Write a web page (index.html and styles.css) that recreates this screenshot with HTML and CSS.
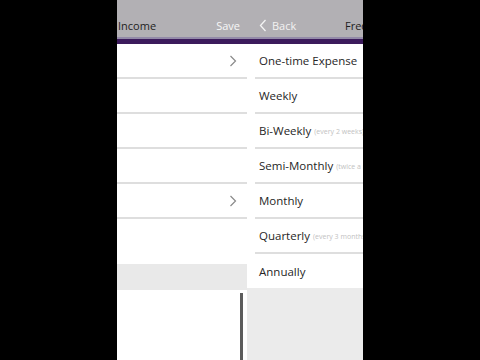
FILE: index.html
```html
<!DOCTYPE html>
<html>
<head>
<meta charset="utf-8">
<link rel="stylesheet" href="styles.css">
</head>
<body>
<div class="phone">
  <section class="panel left">
    <header class="bar">
      <span class="title">Income</span>
      <span class="action">Save</span>
    </header>
    <div class="rows">
      <div class="row"><svg class="chev" width="8" height="12" viewBox="0 0 8 12"><path d="M1.5 1 L6.5 6 L1.5 11" fill="none" stroke="#8a8a8a" stroke-width="1.2"/></svg></div>
      <div class="row"></div>
      <div class="row"></div>
      <div class="row"></div>
      <div class="row"><svg class="chev" width="8" height="12" viewBox="0 0 8 12"><path d="M1.5 1 L6.5 6 L1.5 11" fill="none" stroke="#8a8a8a" stroke-width="1.2"/></svg></div>
    </div>
    <div class="spacer"></div>
    <div class="section"></div>
    <div class="notes"><div class="scroll"></div></div>
  </section>
  <section class="panel right">
    <header class="bar">
      <span class="back"><svg width="8" height="13" viewBox="0 0 8 13"><path d="M6.5 1 L1.5 6.5 L6.5 12" fill="none" stroke="#f4f4f4" stroke-width="1.3"/></svg>Back</span>
      <span class="title">Frequency</span>
    </header>
    <ul class="list">
      <li>One-time Expense</li>
      <li>Weekly</li>
      <li>Bi-Weekly <small>(every 2 weeks)</small></li>
      <li>Semi-Monthly <small>(twice a month)</small></li>
      <li>Monthly</li>
      <li>Quarterly <small>(every 3 months)</small></li>
      <li class="last">Annually</li>
    </ul>
  </section>
</div>
</body>
</html>
```

FILE: styles.css
```css
html, body {
  margin: 0;
  padding: 0;
  background: #000;
  height: 360px;
  overflow: hidden;
}
body {
  display: flex;
  justify-content: center;
  font-family: "Open Sans", "Noto Sans", sans-serif;
}
.phone {
  width: 246px;
  height: 360px;
  display: flex;
  overflow: hidden;
  background: #fff;
}
.panel {
  flex-shrink: 0;
  display: flex;
  flex-direction: column;
  height: 360px;
}
.left {
  width: 130px;
}
.right {
  width: 246px;
  background: #ebebeb;
}
.bar {
  height: 24px;
  padding-top: 13px;
  padding-bottom: 7px;
  background: linear-gradient(#b2b0b4 0 37px, #938aa8 37px 39px, #3c1b5c 39px 44px);
  display: flex;
  align-items: center;
  font-size: 11px;
  flex-shrink: 0;
}
.left .bar {
  justify-content: space-between;
  padding-left: 1px;
  padding-right: 7px;
}
.title { color: #1e1e1e; }
.action { color: #f7f7f7; }
.right .bar {
  padding-left: 12px;
}
.back {
  color: #f2f2f2;
  display: flex;
  align-items: center;
  gap: 5px;
  width: 86px;
}
.rows {
  display: flex;
  flex-direction: column;
  background: #fff;
}
.row {
  height: 33px;
  border-bottom: 2px solid #dedede;
  display: flex;
  align-items: center;
  justify-content: flex-end;
  padding-right: 10px;
}
.spacer {
  height: 45px;
  background: #fff;
}
.section {
  height: 26px;
  background: #e9e9e9;
}
.notes {
  flex: 1;
  background: #fff;
  display: flex;
  justify-content: flex-end;
  padding: 3px 4px 0 0;
}
.scroll {
  width: 3px;
  background: #5c5c5c;
}
.list {
  list-style: none;
  margin: 0;
  padding: 0 0 0 8px;
  background: #fff;
}
.list li {
  height: 33px;
  border-bottom: 2px solid #dedede;
  display: flex;
  align-items: center;
  padding-left: 4px;
  font-size: 11.5px;
  color: #262626;
  white-space: nowrap;
}
.list li.last {
  border-bottom: none;
  height: 34px;
}
.list small {
  font-size: 7px;
  color: #c2c2c2;
  margin-left: 3px;
  margin-top: 2px;
}
```
